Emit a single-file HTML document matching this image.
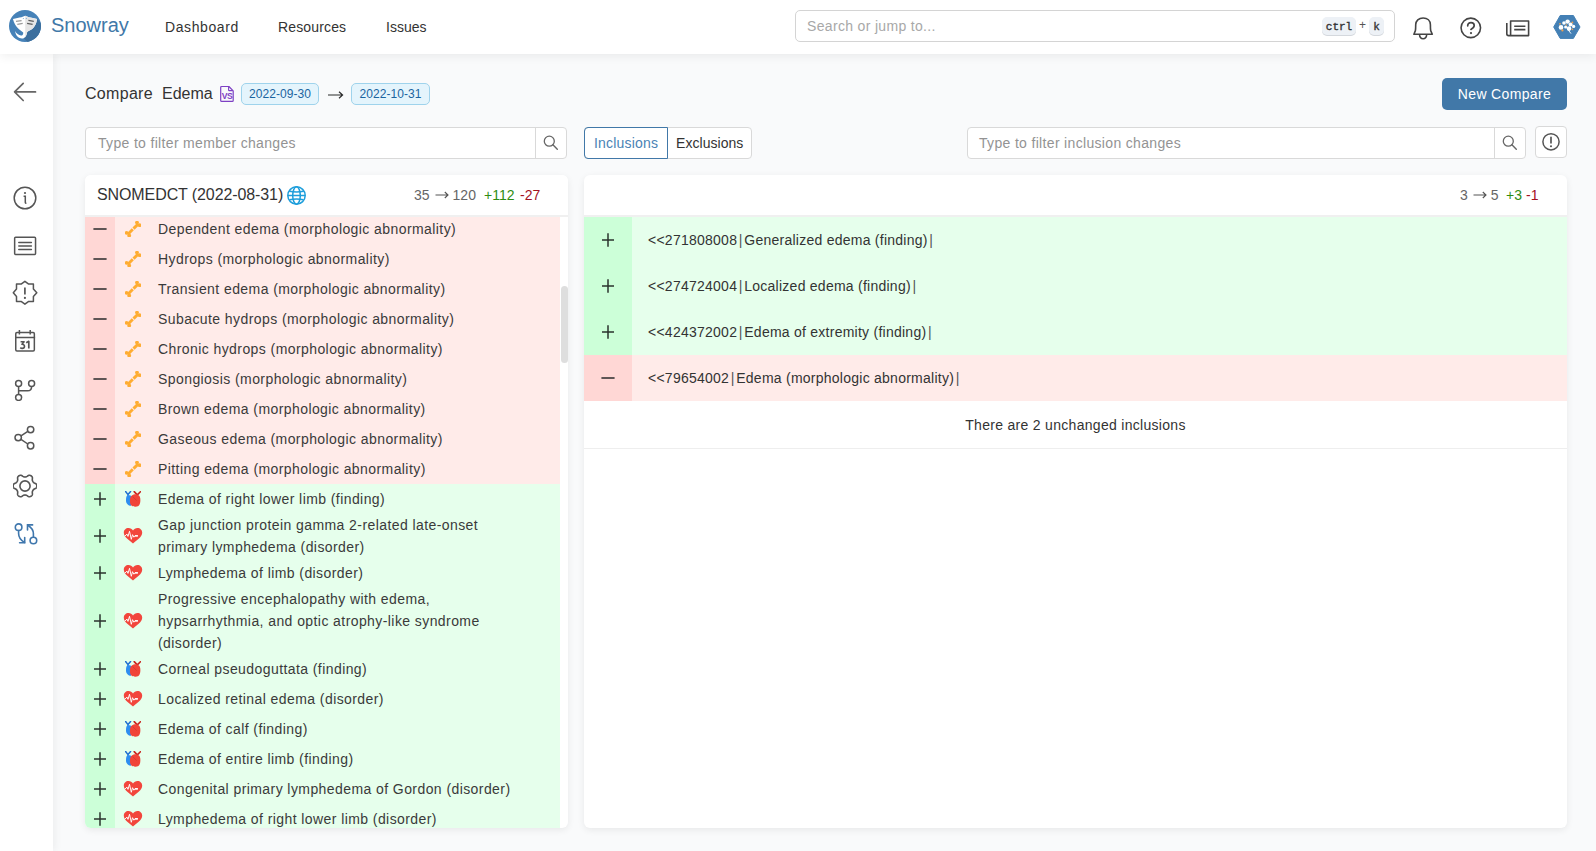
<!DOCTYPE html>
<html><head><meta charset="utf-8">
<style>
*{box-sizing:border-box;margin:0;padding:0}
html,body{width:1596px;height:851px;overflow:hidden;background:#f9fafb;font-family:"Liberation Sans",sans-serif;color:#333;font-size:14px}
.abs{position:absolute}
#hdr{position:absolute;left:0;top:0;width:1596px;height:54px;background:#fff;box-shadow:0 2px 10px rgba(0,0,0,.07);z-index:5}
#side{position:absolute;left:0;top:54px;width:53px;height:797px;background:#fff;box-shadow:2px 0 8px rgba(0,0,0,.055);z-index:4}
.nav{position:absolute;top:17px;font-size:14px;line-height:20px;color:#333;letter-spacing:.3px}
.inp{position:absolute;background:#fff;border:1px solid #d9d9d9;border-radius:4px}
.ph{position:absolute;color:#a8a8a8;font-size:14px;line-height:20px;letter-spacing:.33px;white-space:nowrap}
.kbd{position:absolute;top:17px;height:18px;background:#edf1f6;border-radius:5px;box-shadow:0 1px 0 #d4d8dd;font-family:"Liberation Mono",monospace;font-size:11px;line-height:20px;color:#333;font-weight:normal;-webkit-text-stroke:.35px #333;text-align:center}
.card{position:absolute;background:#fff;border-radius:6px;box-shadow:0 2px 7px rgba(0,0,0,.075);overflow:hidden}
.row{position:absolute;left:0;width:475px;display:flex;align-items:center}
.g{position:absolute;left:0;top:0;bottom:0;width:30px}
.minus .g{background:#ffd7d5}
.minus{background:#ffebe9}
.plus .g{background:#ccffd8}
.plus{background:#e6ffec}
.txt{position:absolute;left:73px;white-space:nowrap;font-size:14px;line-height:22px;color:#3a3a3a;letter-spacing:.42px}
.ico{position:absolute;left:40px;width:16px;height:16px}
.ico.w{left:38px;width:20px}
.sg{position:absolute;left:8px;width:14px;height:14px}
.tag{height:22px;background:#e4f4fc;border:1px solid #9fd3ec;border-radius:5px;font-size:12px;line-height:20px;color:#1b64a0;text-align:center;letter-spacing:.05px}
.btn{background:#4178a8;border-radius:5px;color:#fff;font-size:14px;line-height:32px;text-align:center;letter-spacing:.35px}
.rrow{position:absolute;left:0;width:983px;height:46px}
.g2{position:absolute;left:0;top:0;bottom:0;width:48px}
.rrow.plus .g2{background:#ccffd8}
.rrow.minus .g2{background:#ffd7d5}
.sg2{position:absolute;left:17px;width:14px;height:14px}
.rtxt{position:absolute;left:64px;top:12px;font-size:14px;line-height:22px;color:#333;letter-spacing:.25px;white-space:nowrap}
.bar{color:#555;margin:0 1.6px}
.si{position:absolute;left:13px}
</style></head>
<body>
<svg width="0" height="0" style="position:absolute">
<defs>
<symbol id="bone" viewBox="0 0 16 16">
  <g fill="#ffad33">
   <circle cx="12" cy="1.6" r="1.9"/><circle cx="14.6" cy="4.2" r="1.9"/>
   <circle cx="1.6" cy="11.9" r="1.9"/><circle cx="4.2" cy="14.5" r="1.9"/>
  </g>
  <path d="M2.9 13.2L13.3 2.9" stroke="#ffad33" stroke-width="2.9" stroke-dasharray="6.9 1 20"/>
</symbol>
<symbol id="hp" viewBox="0 0 20 16">
  <path d="M10 15.4C6.4 12.4 0.8 9 0.8 4.8C0.8 2.2 2.8 0.1 5.5 0.1C7.5 0.1 9 1.2 10 2.5C11 1.2 12.5 0.1 14.5 0.1C17.2 0.1 19.2 2.2 19.2 4.8C19.2 9 13.6 12.4 10 15.4Z" fill="#f2463c"/>
  <path d="M2.3 7.7L4 6.1L5 8.4L6.5 3.3L8.3 11.3L9.5 6.7L10.9 9.2L11.8 7.9H14.6" fill="none" stroke="#fff" stroke-width="0.95" stroke-linejoin="round" stroke-linecap="round"/>
  <path d="M12 7.8H14.8" stroke="#fff" stroke-width="1.4"/>
</symbol>
<symbol id="ah" viewBox="0 0 16 16">
  <path d="M0.6 0.5L3 3.6M5.6 0.6L3 3.6M3 3.2V5" stroke="#1f6fd0" stroke-width="1.5" stroke-linecap="round"/>
  <path d="M2.2 4.6C3.2 4 5.6 4 6.4 5L6 14.8C3.4 14.6 1 12.6 1 9.4C1 7.4 1.2 5.4 2.2 4.6Z" fill="#2e8ef0"/>
  <path d="M9.2 0.6L12 3.6M15.4 0.8L12.6 3.6" stroke="#c8241e" stroke-width="1.6" stroke-linecap="round"/>
  <path d="M8.6 3.6C11.6 2.6 14.6 3.6 15.2 7C15.6 9.6 15.4 13.6 13.4 15C11.6 16.2 8 16 6.4 14.6C5 13.2 4.8 10.4 5 8.4C5.2 6 6.6 4.2 8.6 3.6Z" fill="#f04438"/>
  <path d="M7.6 5.4C9 7 10.6 8.6 11.6 9.4" stroke="#d0302a" stroke-width="0.7" fill="none"/>
</symbol>
</defs></svg>
<div id="hdr">
  <svg class="abs" style="left:9px;top:10px" width="32" height="32" viewBox="0 0 32 32">
    <defs><clipPath id="lc"><circle cx="16" cy="16" r="16"/></clipPath><clipPath id="rh"><rect x="16.2" y="0" width="16" height="32"/></clipPath>
    <path id="ray" d="M3.95 9C7 8.2 10 7.8 12.4 7.3L16.2 5.8L19.9 7.3C22.4 7.8 25.2 8.2 28 9C27.6 14 25 18.4 21 20.3C19.6 21 18.4 21.6 18 22.6C17.6 25.2 16.6 27.6 14.7 28.2C11.6 29.2 7 27.6 6 21.1C7.4 23.4 9.6 25.4 12 25.6C13.6 25.6 14.4 24.2 14.2 22.4C12.6 21.2 11.2 20.2 10 19.2C6.8 16.4 4.8 12.8 3.95 9Z"/></defs>
    <circle cx="16" cy="16" r="16" fill="#4682b8"/>
    <path d="M28 9L40 21V40H26L14.7 28.2C16.6 27.6 17.6 25.2 18 22.6C18.4 21.6 19.6 21 21 20.3C25 18.4 27.6 14 28 9Z" fill="#3c6f9e" clip-path="url(#lc)"/>
    <use href="#ray" fill="#fff"/>
    <use href="#ray" fill="#e6e6e6" clip-path="url(#rh)"/>
    <path d="M7 11.4L12.6 10.6M8.3 14.4L13.7 13.4" stroke="#9c9c9c" stroke-width="1.3"/>
    <path d="M19.4 10.4L24.8 11.4M18.1 13.4L23.6 14.4" stroke="#5e5e5e" stroke-width="1.3"/>
    <circle cx="14.3" cy="8.4" r=".5" fill="#6aa0d0"/><circle cx="17.3" cy="8.4" r=".5" fill="#6aa0d0"/>
  </svg>
  <div class="abs" style="left:51px;top:13px;font-size:20px;line-height:24px;color:#4178a8">Snowray</div>
  <div class="nav" style="left:165px;letter-spacing:.6px">Dashboard</div>
  <div class="nav" style="left:278px;letter-spacing:.15px">Resources</div>
  <div class="nav" style="left:386px;letter-spacing:0">Issues</div>
  <div class="inp" style="left:795px;top:10px;width:600px;height:32px;border-color:#d4d4d4;border-radius:5px"></div>
  <div class="ph" style="left:807px;top:16px">Search or jump to...</div>
  <div class="kbd" style="left:1322px;width:34px">ctrl</div>
  <div class="abs" style="left:1359px;top:16px;font-size:12px;line-height:18px;color:#555">+</div>
  <div class="kbd" style="left:1369px;width:15px">k</div>

  <svg class="abs" style="left:1412px;top:16px" width="22" height="24" viewBox="0 0 22 24"><path d="M1.9 18.2H20.3L18.7 14.6C18.4 13.4 18.4 11.6 18.4 8.8C18.4 4.8 15.4 2 11.1 2C6.8 2 3.7 4.8 3.7 8.8C3.7 11.6 3.7 13.4 3.4 14.6Z" fill="none" stroke="#444" stroke-width="1.6" stroke-linejoin="round"/><path d="M7.5 18.6C7.7 21.1 9.1 22.7 11.1 22.7C13.1 22.7 14.5 21.1 14.7 18.6" fill="none" stroke="#444" stroke-width="1.5"/></svg>
  <svg class="abs" style="left:1459px;top:16px" width="24" height="24" viewBox="0 0 24 24"><circle cx="11.8" cy="11.85" r="9.75" fill="none" stroke="#444" stroke-width="1.6"/><path d="M8.7 9.8C8.7 7.8 10.2 6.6 12 6.6C13.8 6.6 15.2 7.8 15.2 9.5C15.2 11.5 13.5 12.5 11.9 13.4" fill="none" stroke="#444" stroke-width="1.7" stroke-linecap="round"/><circle cx="12" cy="17.1" r="1.1" fill="#444"/></svg>
  <svg class="abs" style="left:1505px;top:18px" width="26" height="20" viewBox="0 0 26 20"><path d="M5.6 17.6V3H23.6V17.6H3.6C2.4 17.6 1.8 17 1.8 15.8V5" fill="none" stroke="#444" stroke-width="1.6" stroke-linejoin="round"/><path d="M9.2 8.2H20.4M9.2 11.6H20.4" stroke="#444" stroke-width="1.6"/></svg>
  <svg class="abs" style="left:1553px;top:15px" width="28" height="25" viewBox="0 0 28 25"><path d="M7.2 .5H20.4L27 12L20.4 23.4H7.2L.7 12Z" fill="#4480b5" stroke="#4480b5" stroke-linejoin="round" stroke-width="1"/>
   <g fill="#fff"><circle cx="11" cy="8" r="1.8"/><circle cx="14.6" cy="6.6" r="2.2"/><circle cx="17.6" cy="9.6" r="2"/><circle cx="8" cy="12.4" r="2.3"/><circle cx="12.6" cy="12" r="1.5"/><circle cx="16" cy="13.6" r="2.3"/><circle cx="20.6" cy="11.4" r="1.6"/><path d="M15 14.6L18 18.6" stroke="#fff" stroke-width=".9"/></g>
   <g fill="#f0a050"><circle cx="7" cy="8.8" r=".9"/><circle cx="9.4" cy="15.4" r="1.1"/><circle cx="13.4" cy="10" r=".8"/><circle cx="19.4" cy="7.4" r=".9"/><circle cx="19.4" cy="14.4" r=".8"/></g></svg>
</div>
<div id="side">
 <svg class="abs" style="left:13px;top:28px" width="24" height="20" viewBox="0 0 24 20"><path d="M22.5 9.9H1.8M10.2 1.3L1.6 9.9L10.2 18.5" fill="none" stroke="#666" stroke-width="1.7" stroke-linecap="round" stroke-linejoin="round"/></svg>
 <svg class="abs" style="left:13px;top:132px" width="24" height="24" viewBox="0 0 24 24"><circle cx="12" cy="12" r="10.8" fill="none" stroke="#555" stroke-width="1.5"/><circle cx="12" cy="7" r="1.1" fill="#555"/><path d="M10.6 10.3H12.3V16.4Q12.3 17.3 13.4 17.3" fill="none" stroke="#555" stroke-width="1.5"/></svg>
 <svg class="abs" style="left:13px;top:181px" width="24" height="22" viewBox="0 0 24 22"><rect x="1.65" y="2.25" width="20.9" height="17.2" rx="1" fill="none" stroke="#555" stroke-width="1.5"/><path d="M5.8 7.4H18.4M5.8 10.9H18.4M5.8 14.4H18.4" stroke="#555" stroke-width="1.5" stroke-linecap="round"/></svg>
 <svg class="abs" style="left:12px;top:226px" width="26" height="26" viewBox="0 0 26 26"><path d="M12.9 1.3L9.1 4.1H4.5V9L1.3 12.8L4.5 16.6V21.4H9.1L12.9 24.2L16.7 21.4H21.4V16.6L24.8 12.8L21.4 9V4.1H16.7Z" fill="none" stroke="#555" stroke-width="1.5" stroke-linejoin="round"/><path d="M12.9 7.4V14.4" stroke="#555" stroke-width="1.7"/><circle cx="12.9" cy="17.9" r="1.1" fill="#555"/></svg>
 <svg class="abs" style="left:14px;top:275px" width="22" height="24" viewBox="0 0 22 24"><g fill="none" stroke="#555" stroke-width="1.5"><rect x="1.75" y="3.55" width="18.6" height="18.4" rx="1.2"/><path d="M1 8.5H21.1M5.4 0.9V5.6M16.2 0.9V5.6"/><path d="M6.6 12.7H10.1L8 15.3C9.6 15.2 10.5 16 10.5 17.2C10.5 18.6 9.5 19.4 8.2 19.4C7.4 19.4 6.8 19.1 6.3 18.6" stroke-width="1.6" stroke-linejoin="round"/><path d="M12.2 13.8L14.8 12.3V19.6" stroke-width="1.7" stroke-linejoin="round"/></g></svg>
 <svg class="abs" style="left:13px;top:322.5px" width="24" height="24" viewBox="0 0 24 24"><circle cx="5.6" cy="6.4" r="3" fill="none" stroke="#555" stroke-width="1.5"/><circle cx="18.6" cy="6.4" r="3" fill="none" stroke="#555" stroke-width="1.5"/><circle cx="5.6" cy="20.4" r="3" fill="none" stroke="#555" stroke-width="1.5"/><path d="M5.6 9.4V17.4M18.6 9.4C18.6 12.6 17.4 13.8 14.6 13.8H5.6" fill="none" stroke="#555" stroke-width="1.5"/></svg>
 <svg class="abs" style="left:13px;top:370px" width="24" height="26" viewBox="0 0 24 26"><circle cx="17.6" cy="5.6" r="3.2" fill="none" stroke="#555" stroke-width="1.5"/><circle cx="5.2" cy="13.6" r="3.2" fill="none" stroke="#555" stroke-width="1.5"/><circle cx="17.6" cy="21.8" r="3.2" fill="none" stroke="#555" stroke-width="1.5"/><path d="M8 11.8L14.8 7.4M8 15.4L14.8 20" stroke="#555" stroke-width="1.5"/></svg>
 <svg class="abs" style="left:13px;top:420px" width="24" height="24" viewBox="0 0 24 24"><path d="M23.85 12.00 L23.83 12.41 L23.77 12.82 L23.66 13.23 L23.48 13.61 L23.21 13.98 L22.83 14.30 L22.35 14.58 L21.83 14.82 L21.35 15.04 L20.95 15.26 L20.63 15.49 L20.39 15.73 L20.18 15.99 L20.00 16.25 L19.84 16.52 L19.69 16.80 L19.55 17.09 L19.43 17.40 L19.34 17.73 L19.29 18.12 L19.31 18.58 L19.36 19.11 L19.41 19.67 L19.41 20.23 L19.31 20.72 L19.14 21.13 L18.89 21.48 L18.60 21.78 L18.27 22.04 L17.93 22.26 L17.56 22.45 L17.17 22.60 L16.77 22.71 L16.34 22.75 L15.89 22.69 L15.42 22.53 L14.94 22.26 L14.48 21.93 L14.04 21.62 L13.65 21.38 L13.30 21.22 L12.96 21.13 L12.63 21.08 L12.32 21.06 L12.00 21.05 L11.68 21.06 L11.37 21.08 L11.04 21.13 L10.70 21.22 L10.35 21.38 L9.96 21.62 L9.52 21.93 L9.06 22.26 L8.58 22.53 L8.11 22.69 L7.66 22.75 L7.23 22.71 L6.83 22.60 L6.44 22.45 L6.08 22.26 L5.73 22.04 L5.40 21.78 L5.11 21.48 L4.86 21.13 L4.69 20.72 L4.59 20.23 L4.59 19.67 L4.64 19.11 L4.69 18.58 L4.71 18.12 L4.66 17.73 L4.57 17.40 L4.45 17.09 L4.31 16.80 L4.16 16.52 L4.00 16.25 L3.82 15.99 L3.61 15.73 L3.37 15.49 L3.05 15.26 L2.65 15.04 L2.17 14.82 L1.65 14.58 L1.17 14.30 L0.79 13.98 L0.52 13.61 L0.34 13.23 L0.23 12.82 L0.17 12.41 L0.15 12.00 L0.17 11.59 L0.23 11.18 L0.34 10.77 L0.52 10.39 L0.79 10.02 L1.17 9.70 L1.65 9.42 L2.17 9.18 L2.65 8.96 L3.05 8.74 L3.37 8.51 L3.61 8.27 L3.82 8.01 L4.00 7.75 L4.16 7.47 L4.31 7.20 L4.45 6.91 L4.57 6.60 L4.66 6.27 L4.71 5.88 L4.69 5.42 L4.64 4.89 L4.59 4.33 L4.59 3.77 L4.69 3.28 L4.86 2.87 L5.11 2.52 L5.40 2.22 L5.73 1.96 L6.07 1.74 L6.44 1.55 L6.83 1.40 L7.23 1.29 L7.66 1.25 L8.11 1.31 L8.58 1.47 L9.06 1.74 L9.52 2.07 L9.96 2.38 L10.35 2.62 L10.70 2.78 L11.04 2.87 L11.37 2.92 L11.68 2.94 L12.00 2.95 L12.32 2.94 L12.63 2.92 L12.96 2.87 L13.30 2.78 L13.65 2.62 L14.04 2.38 L14.48 2.07 L14.94 1.74 L15.42 1.47 L15.89 1.31 L16.34 1.25 L16.77 1.29 L17.17 1.40 L17.56 1.55 L17.93 1.74 L18.27 1.96 L18.60 2.22 L18.89 2.52 L19.14 2.87 L19.31 3.28 L19.41 3.77 L19.41 4.33 L19.36 4.89 L19.31 5.42 L19.29 5.88 L19.34 6.27 L19.43 6.60 L19.55 6.91 L19.69 7.20 L19.84 7.47 L20.00 7.75 L20.18 8.01 L20.39 8.27 L20.63 8.51 L20.95 8.74 L21.35 8.96 L21.83 9.18 L22.35 9.42 L22.83 9.70 L23.21 10.02 L23.48 10.39 L23.66 10.77 L23.77 11.18 L23.83 11.59Z" fill="none" stroke="#555" stroke-width="1.6" stroke-linejoin="round"/><circle cx="12" cy="12" r="5.1" fill="none" stroke="#555" stroke-width="1.6"/></svg>
 <svg class="abs" style="left:13px;top:467px" width="26" height="26" viewBox="0 0 26 26"><g fill="none" stroke="#3f77ad" stroke-width="1.6" stroke-linecap="round"><circle cx="5.6" cy="6.2" r="3.3"/><circle cx="20.4" cy="19.5" r="3.3"/><path d="M5.6 9.5V12.6C5.6 16.2 7.6 19.2 11.5 21.5"/><path d="M11.7 16.6V21.8H6.6"/><path d="M20.4 16.2V12.6C20.4 9 18.6 6.6 14.8 4.2"/><path d="M14.5 9V3.9H19.6"/></g></svg>
</div>

<div class="abs" style="left:85px;top:84px;font-size:16px;line-height:20px;color:#333;letter-spacing:.3px;white-space:nowrap">Compare</div><div class="abs" style="left:162px;top:84px;font-size:16px;line-height:20px;color:#333;letter-spacing:0;white-space:nowrap">Edema</div>
<svg class="abs" style="left:219px;top:85px" width="16" height="18" viewBox="0 0 16 18">
  <path d="M1.7 2.4Q1.7 1.5 2.6 1.5H9.9L14.2 5.8V15.5Q14.2 16.4 13.3 16.4H2.6Q1.7 16.4 1.7 15.5Z" fill="none" stroke="#7e40c4" stroke-width="1.2" stroke-linejoin="round"/>
  <path d="M9.6 1.8V4.9Q9.6 5.6 10.3 5.6H13.8" fill="none" stroke="#7e40c4" stroke-width="1.1"/>
  <text x="8.1" y="13.8" font-family="Liberation Sans" font-size="8.6" font-weight="bold" fill="#7e40c4" text-anchor="middle" letter-spacing="-.3">VS</text>
</svg>
<div class="tag abs" style="left:241px;top:83px;width:78px">2022-09-30</div>
<svg class="abs" style="left:327px;top:89px" width="17" height="12" viewBox="0 0 17 12"><path d="M1 6H15.6M12 2.8L15.6 6L12 9.2" fill="none" stroke="#2a2a2a" stroke-width="1.15"/></svg>
<div class="tag abs" style="left:351px;top:83px;width:79px">2022-10-31</div>

<div class="abs btn" style="left:1442px;top:78px;width:125px;height:32px">New Compare</div>

<div class="inp" style="left:85px;top:127px;width:482px;height:32px"></div>
<div class="abs" style="left:535px;top:127px;width:1px;height:32px;background:#d9d9d9"></div>
<div class="ph" style="left:98px;top:133px;color:#939393">Type to filter member changes</div>
<svg class="abs" style="left:542px;top:134px" width="18" height="18" viewBox="0 0 18 18"><circle cx="7.3" cy="7.2" r="5" fill="none" stroke="#666" stroke-width="1.3"/><path d="M10.9 10.8L15.3 15.2" stroke="#666" stroke-width="1.4" stroke-linecap="round"/></svg>

<div class="inp" style="left:584px;top:127px;width:168px;height:32px"></div>
<div class="abs" style="left:584px;top:127px;width:84px;height:32px;border:1px solid #4178a8;border-radius:4px 0 0 4px"></div>
<div class="abs" style="left:594px;top:133px;font-size:14px;line-height:20px;color:#4a83b5;letter-spacing:.2px">Inclusions</div>
<div class="abs" style="left:676px;top:133px;font-size:14px;line-height:20px;color:#333;letter-spacing:.05px">Exclusions</div>

<div class="inp" style="left:967px;top:127px;width:559px;height:32px"></div>
<div class="abs" style="left:1494px;top:127px;width:1px;height:32px;background:#d9d9d9"></div>
<div class="ph" style="left:979px;top:133px;color:#939393">Type to filter inclusion changes</div>
<svg class="abs" style="left:1501px;top:134px" width="18" height="18" viewBox="0 0 18 18"><circle cx="7.3" cy="7.2" r="5" fill="none" stroke="#666" stroke-width="1.3"/><path d="M10.9 10.8L15.3 15.2" stroke="#666" stroke-width="1.4" stroke-linecap="round"/></svg>
<div class="inp" style="left:1535px;top:126px;width:32px;height:32px"></div>
<svg class="abs" style="left:1539px;top:130px" width="24" height="24" viewBox="0 0 24 24"><circle cx="12" cy="11.8" r="8.1" fill="none" stroke="#555" stroke-width="1.5"/><path d="M12 7.4V12.8" stroke="#555" stroke-width="1.7" stroke-linecap="round"/><circle cx="12" cy="16.3" r="1.05" fill="#555"/></svg>

<!-- LEFT CARD -->
<div class="card" style="left:85px;top:175px;width:483px;height:653px">
  <div class="abs" style="left:0;top:0;width:483px;height:42px;background:#fff;border-bottom:2px solid #f0f0f0;z-index:2"></div>
  <div class="abs" style="left:12px;top:9px;font-size:16px;line-height:22px;color:#333;z-index:3;letter-spacing:-.1px">SNOMEDCT (2022-08-31)</div>
  <svg class="abs" style="left:201px;top:10px;z-index:3" width="21" height="21" viewBox="0 0 21 21"><g fill="none" stroke="#1e9edb" stroke-width="1.5"><circle cx="10.5" cy="10.5" r="8.7"/><ellipse cx="10.5" cy="10.5" rx="3.8" ry="8.7"/><path d="M1.8 10.5H19.2M3.4 6.2Q10.5 7.6 17.6 6.2M3.4 14.8Q10.5 13.4 17.6 14.8"/></g></svg>
  <div class="abs" style="left:329px;top:9px;font-size:14px;line-height:22px;color:#666;z-index:3;white-space:nowrap">35<svg width="14" height="10" viewBox="0 0 14 10" style="vertical-align:0px;margin:0 4px 0 5px"><path d="M0.5 5H13M9.8 2L13 5L9.8 8" fill="none" stroke="#555" stroke-width="1.1"/></svg>120</div>
  <div class="abs" style="left:399px;top:9px;font-size:14px;line-height:22px;color:#2f8c12;z-index:3">+112</div>
  <div class="abs" style="left:435px;top:9px;font-size:14px;line-height:22px;color:#a3121f;z-index:3">-27</div>
  <div class="abs" style="left:475.5px;top:111px;width:7px;height:77px;background:#dedede;border-radius:4px;z-index:3"></div>
  <div id="list" class="abs" style="left:0;top:39px;width:475px;height:620px">
  <div class="row minus" style="top:0px;height:30px"><div class="g"></div><svg class="sg" style="top:8px" width="14" height="14" viewBox="0 0 14 14"><path d="M1 7H13" stroke="#2b2b2b" stroke-width="1.6" stroke-linecap="round"/></svg><svg class="ico" style="top:7px" width="16" height="16"><use href="#bone"/></svg><div class="txt" style="top:4px">Dependent edema (morphologic abnormality)</div></div>
<div class="row minus" style="top:30px;height:30px"><div class="g"></div><svg class="sg" style="top:8px" width="14" height="14" viewBox="0 0 14 14"><path d="M1 7H13" stroke="#2b2b2b" stroke-width="1.6" stroke-linecap="round"/></svg><svg class="ico" style="top:7px" width="16" height="16"><use href="#bone"/></svg><div class="txt" style="top:4px">Hydrops (morphologic abnormality)</div></div>
<div class="row minus" style="top:60px;height:30px"><div class="g"></div><svg class="sg" style="top:8px" width="14" height="14" viewBox="0 0 14 14"><path d="M1 7H13" stroke="#2b2b2b" stroke-width="1.6" stroke-linecap="round"/></svg><svg class="ico" style="top:7px" width="16" height="16"><use href="#bone"/></svg><div class="txt" style="top:4px">Transient edema (morphologic abnormality)</div></div>
<div class="row minus" style="top:90px;height:30px"><div class="g"></div><svg class="sg" style="top:8px" width="14" height="14" viewBox="0 0 14 14"><path d="M1 7H13" stroke="#2b2b2b" stroke-width="1.6" stroke-linecap="round"/></svg><svg class="ico" style="top:7px" width="16" height="16"><use href="#bone"/></svg><div class="txt" style="top:4px">Subacute hydrops (morphologic abnormality)</div></div>
<div class="row minus" style="top:120px;height:30px"><div class="g"></div><svg class="sg" style="top:8px" width="14" height="14" viewBox="0 0 14 14"><path d="M1 7H13" stroke="#2b2b2b" stroke-width="1.6" stroke-linecap="round"/></svg><svg class="ico" style="top:7px" width="16" height="16"><use href="#bone"/></svg><div class="txt" style="top:4px">Chronic hydrops (morphologic abnormality)</div></div>
<div class="row minus" style="top:150px;height:30px"><div class="g"></div><svg class="sg" style="top:8px" width="14" height="14" viewBox="0 0 14 14"><path d="M1 7H13" stroke="#2b2b2b" stroke-width="1.6" stroke-linecap="round"/></svg><svg class="ico" style="top:7px" width="16" height="16"><use href="#bone"/></svg><div class="txt" style="top:4px">Spongiosis (morphologic abnormality)</div></div>
<div class="row minus" style="top:180px;height:30px"><div class="g"></div><svg class="sg" style="top:8px" width="14" height="14" viewBox="0 0 14 14"><path d="M1 7H13" stroke="#2b2b2b" stroke-width="1.6" stroke-linecap="round"/></svg><svg class="ico" style="top:7px" width="16" height="16"><use href="#bone"/></svg><div class="txt" style="top:4px">Brown edema (morphologic abnormality)</div></div>
<div class="row minus" style="top:210px;height:30px"><div class="g"></div><svg class="sg" style="top:8px" width="14" height="14" viewBox="0 0 14 14"><path d="M1 7H13" stroke="#2b2b2b" stroke-width="1.6" stroke-linecap="round"/></svg><svg class="ico" style="top:7px" width="16" height="16"><use href="#bone"/></svg><div class="txt" style="top:4px">Gaseous edema (morphologic abnormality)</div></div>
<div class="row minus" style="top:240px;height:30px"><div class="g"></div><svg class="sg" style="top:8px" width="14" height="14" viewBox="0 0 14 14"><path d="M1 7H13" stroke="#2b2b2b" stroke-width="1.6" stroke-linecap="round"/></svg><svg class="ico" style="top:7px" width="16" height="16"><use href="#bone"/></svg><div class="txt" style="top:4px">Pitting edema (morphologic abnormality)</div></div>
<div class="row plus" style="top:270px;height:30px"><div class="g"></div><svg class="sg" style="top:8px" width="14" height="14" viewBox="0 0 14 14"><path d="M1 7H13M7 0.3V13.7" stroke="#2a332c" stroke-width="1.5"/></svg><svg class="ico" style="top:7px" width="16" height="16"><use href="#ah"/></svg><div class="txt" style="top:4px">Edema of right lower limb (finding)</div></div>
<div class="row plus" style="top:300px;height:44px"><div class="g"></div><svg class="sg" style="top:15px" width="14" height="14" viewBox="0 0 14 14"><path d="M1 7H13M7 0.3V13.7" stroke="#2a332c" stroke-width="1.5"/></svg><svg class="ico w" style="top:14px" width="20" height="16" viewBox="0 0 20 16"><use href="#hp"/></svg><div class="txt" style="top:0px">Gap junction protein gamma 2-related late-onset<br>primary lymphedema (disorder)</div></div>
<div class="row plus" style="top:344px;height:30px"><div class="g"></div><svg class="sg" style="top:8px" width="14" height="14" viewBox="0 0 14 14"><path d="M1 7H13M7 0.3V13.7" stroke="#2a332c" stroke-width="1.5"/></svg><svg class="ico w" style="top:7px" width="20" height="16" viewBox="0 0 20 16"><use href="#hp"/></svg><div class="txt" style="top:4px">Lymphedema of limb (disorder)</div></div>
<div class="row plus" style="top:374px;height:66px"><div class="g"></div><svg class="sg" style="top:26px" width="14" height="14" viewBox="0 0 14 14"><path d="M1 7H13M7 0.3V13.7" stroke="#2a332c" stroke-width="1.5"/></svg><svg class="ico w" style="top:25px" width="20" height="16" viewBox="0 0 20 16"><use href="#hp"/></svg><div class="txt" style="top:0px">Progressive encephalopathy with edema,<br>hypsarrhythmia, and optic atrophy-like syndrome<br>(disorder)</div></div>
<div class="row plus" style="top:440px;height:30px"><div class="g"></div><svg class="sg" style="top:8px" width="14" height="14" viewBox="0 0 14 14"><path d="M1 7H13M7 0.3V13.7" stroke="#2a332c" stroke-width="1.5"/></svg><svg class="ico" style="top:7px" width="16" height="16"><use href="#ah"/></svg><div class="txt" style="top:4px">Corneal pseudoguttata (finding)</div></div>
<div class="row plus" style="top:470px;height:30px"><div class="g"></div><svg class="sg" style="top:8px" width="14" height="14" viewBox="0 0 14 14"><path d="M1 7H13M7 0.3V13.7" stroke="#2a332c" stroke-width="1.5"/></svg><svg class="ico w" style="top:7px" width="20" height="16" viewBox="0 0 20 16"><use href="#hp"/></svg><div class="txt" style="top:4px">Localized retinal edema (disorder)</div></div>
<div class="row plus" style="top:500px;height:30px"><div class="g"></div><svg class="sg" style="top:8px" width="14" height="14" viewBox="0 0 14 14"><path d="M1 7H13M7 0.3V13.7" stroke="#2a332c" stroke-width="1.5"/></svg><svg class="ico" style="top:7px" width="16" height="16"><use href="#ah"/></svg><div class="txt" style="top:4px">Edema of calf (finding)</div></div>
<div class="row plus" style="top:530px;height:30px"><div class="g"></div><svg class="sg" style="top:8px" width="14" height="14" viewBox="0 0 14 14"><path d="M1 7H13M7 0.3V13.7" stroke="#2a332c" stroke-width="1.5"/></svg><svg class="ico" style="top:7px" width="16" height="16"><use href="#ah"/></svg><div class="txt" style="top:4px">Edema of entire limb (finding)</div></div>
<div class="row plus" style="top:560px;height:30px"><div class="g"></div><svg class="sg" style="top:8px" width="14" height="14" viewBox="0 0 14 14"><path d="M1 7H13M7 0.3V13.7" stroke="#2a332c" stroke-width="1.5"/></svg><svg class="ico w" style="top:7px" width="20" height="16" viewBox="0 0 20 16"><use href="#hp"/></svg><div class="txt" style="top:4px">Congenital primary lymphedema of Gordon (disorder)</div></div>
<div class="row plus" style="top:590px;height:30px"><div class="g"></div><svg class="sg" style="top:8px" width="14" height="14" viewBox="0 0 14 14"><path d="M1 7H13M7 0.3V13.7" stroke="#2a332c" stroke-width="1.5"/></svg><svg class="ico w" style="top:7px" width="20" height="16" viewBox="0 0 20 16"><use href="#hp"/></svg><div class="txt" style="top:4px">Lymphedema of right lower limb (disorder)</div></div>
  </div>
</div>

<!-- RIGHT CARD -->
<div class="card" style="left:584px;top:175px;width:983px;height:653px">
  <div class="abs" style="left:0;top:40px;width:983px;height:2px;background:#f0f0f0"></div>
  <div class="abs" style="left:876px;top:9px;font-size:14px;line-height:22px;color:#666;white-space:nowrap">3<svg width="14" height="10" viewBox="0 0 14 10" style="vertical-align:0px;margin:0 4px 0 5px"><path d="M0.5 5H13M9.8 2L13 5L9.8 8" fill="none" stroke="#555" stroke-width="1.1"/></svg>5</div>
  <div class="abs" style="left:922px;top:9px;font-size:14px;line-height:22px;color:#2f8c12">+3</div>
  <div class="abs" style="left:942px;top:9px;font-size:14px;line-height:22px;color:#a3121f">-1</div>
  <div class="rrow plus" style="top:42px"><div class="g2"></div><svg class="sg2" style="top:16px" width="14" height="14" viewBox="0 0 14 14"><path d="M1 7H13M7 0.3V13.7" stroke="#2a332c" stroke-width="1.5"/></svg><div class="rtxt">&lt;&lt;271808008<span class="bar">|</span>Generalized edema (finding)<span class="bar">|</span></div></div>
<div class="rrow plus" style="top:88px"><div class="g2"></div><svg class="sg2" style="top:16px" width="14" height="14" viewBox="0 0 14 14"><path d="M1 7H13M7 0.3V13.7" stroke="#2a332c" stroke-width="1.5"/></svg><div class="rtxt">&lt;&lt;274724004<span class="bar">|</span>Localized edema (finding)<span class="bar">|</span></div></div>
<div class="rrow plus" style="top:134px"><div class="g2"></div><svg class="sg2" style="top:16px" width="14" height="14" viewBox="0 0 14 14"><path d="M1 7H13M7 0.3V13.7" stroke="#2a332c" stroke-width="1.5"/></svg><div class="rtxt">&lt;&lt;424372002<span class="bar">|</span>Edema of extremity (finding)<span class="bar">|</span></div></div>
<div class="rrow minus" style="top:180px"><div class="g2"></div><svg class="sg2" style="top:16px" width="14" height="14" viewBox="0 0 14 14"><path d="M1 7H13" stroke="#2b2b2b" stroke-width="1.6" stroke-linecap="round"/></svg><div class="rtxt">&lt;&lt;79654002<span class="bar">|</span>Edema (morphologic abnormality)<span class="bar">|</span></div></div>
  <div class="abs" style="left:0;top:226px;width:983px;height:48px;border-bottom:1px solid #eee;text-align:center;font-size:14px;line-height:48px;color:#333;letter-spacing:.3px">There are 2 unchanged inclusions</div>
</div>

</body></html>
